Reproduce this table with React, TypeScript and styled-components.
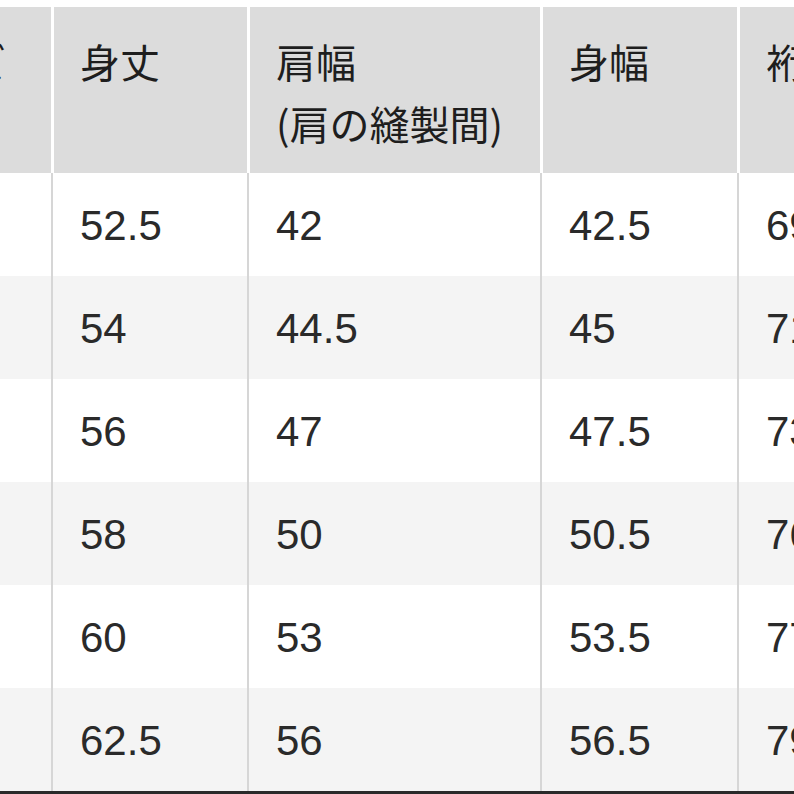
import React from 'react';
import styled, { createGlobalStyle } from 'styled-components';

const GlobalStyle = createGlobalStyle`
  html, body {
    margin: 0;
    padding: 0;
    background: #ffffff;
    overflow: hidden;
  }
  body {
    font-family: "Liberation Sans", "Noto Sans CJK JP", sans-serif;
  }
`;

const COLUMNS = '190px 196px 293px 197px 240px';

type SizeRow = {
  size: string;
  length: string;
  shoulder: string;
  width: string;
  sleeve: string;
};

const rows: SizeRow[] = [
  { size: 'S', length: '52.5', shoulder: '42', width: '42.5', sleeve: '69' },
  { size: 'M', length: '54', shoulder: '44.5', width: '45', sleeve: '71' },
  { size: 'L', length: '56', shoulder: '47', width: '47.5', sleeve: '73' },
  { size: 'XL', length: '58', shoulder: '50', width: '50.5', sleeve: '76' },
  { size: 'XXL', length: '60', shoulder: '53', width: '53.5', sleeve: '77' },
  { size: '3XL', length: '62.5', shoulder: '56', width: '56.5', sleeve: '79' },
];

const Page = styled.div`
  width: 794px;
  height: 794px;
  overflow: hidden;
  padding-top: 7px;
  box-sizing: border-box;
  display: flex;
  flex-direction: column;
`;

const Table = styled.div`
  margin-left: -139px;
  width: 1116px;
  display: flex;
  flex-direction: column;
  border-bottom: 3px solid #2a2a2a;
`;

const HeaderRow = styled.div`
  display: grid;
  grid-template-columns: ${COLUMNS};
  height: 166px;
  background: #dcdcdc;
`;

const HeaderCell = styled.div<{ $first?: boolean }>`
  box-sizing: border-box;
  border-left: ${(p) => (p.$first ? 'none' : '3px solid #ffffff')};
  padding: 23px 0 0 26px;
  font-family: "Noto Sans CJK JP", "Liberation Sans", sans-serif;
  font-size: 40px;
  line-height: 62px;
  color: #1e1e1e;
  white-space: nowrap;
  overflow: hidden;
`;

const BodyRow = styled.div<{ $striped: boolean }>`
  display: grid;
  grid-template-columns: ${COLUMNS};
  height: 103px;
  background: ${(p) => (p.$striped ? '#f4f4f4' : '#ffffff')};
`;

const BodyCell = styled.div<{ $first?: boolean }>`
  box-sizing: border-box;
  border-left: ${(p) => (p.$first ? 'none' : '2px solid #d6d6d6')};
  display: flex;
  align-items: center;
  padding-left: 27px;
  padding-top: 2px;
  font-size: 42px;
  color: #2a2a2a;
  white-space: nowrap;
  overflow: hidden;
`;

const SizeCell = styled(BodyCell)`
  color: transparent;
`;

const App = () => {
  return (
    <>
      <GlobalStyle />
      <Page>
        <Table>
          <HeaderRow>
            <HeaderCell $first>サイズ</HeaderCell>
            <HeaderCell>身丈</HeaderCell>
            <HeaderCell>
              肩幅
              <br />
              (肩の縫製間)
            </HeaderCell>
            <HeaderCell>身幅</HeaderCell>
            <HeaderCell>裄丈</HeaderCell>
          </HeaderRow>
          {rows.map((row, i) => (
            <BodyRow key={row.size} $striped={i % 2 === 1}>
              <SizeCell $first>{row.size}</SizeCell>
              <BodyCell>{row.length}</BodyCell>
              <BodyCell>{row.shoulder}</BodyCell>
              <BodyCell>{row.width}</BodyCell>
              <BodyCell>{row.sleeve}</BodyCell>
            </BodyRow>
          ))}
        </Table>
      </Page>
    </>
  );
};

export default App;
